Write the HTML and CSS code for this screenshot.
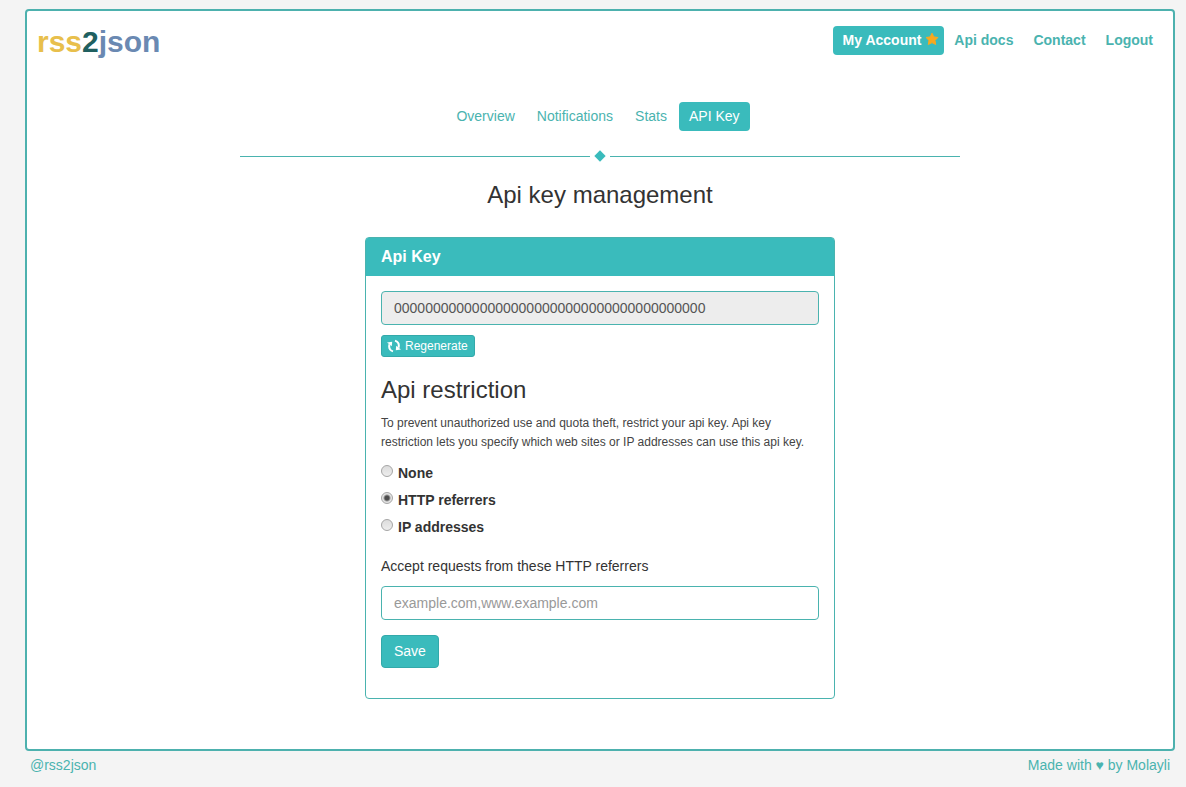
FILE: index.html
```html
<!DOCTYPE html>
<html lang="en">
<head>
    <meta charset="UTF-8">
    <meta name="viewport" content="width=device-width, initial-scale=1.0">
    <title>rss2json - Api key management</title>
    <link rel="stylesheet" href="styles.css">
</head>
<body>
    <div class="page">
        <header class="header">
            <a class="logo" href="#"><span class="logo-rss">rss</span><span class="logo-two">2</span><span class="logo-json">json</span></a>
            <nav class="main-nav">
                <a class="pill active account" href="#">My Account
                    <svg class="star" viewBox="0 0 14 14" aria-hidden="true">
                        <path d="M7 1.2 L8.8 4.9 L12.9 5.5 L10 8.4 L10.7 12.5 L7 10.6 L3.3 12.5 L4 8.4 L1.1 5.5 L5.2 4.9 Z"/>
                    </svg>
                </a>
                <a class="pill" href="#">Api docs</a>
                <a class="pill" href="#">Contact</a>
                <a class="pill" href="#">Logout</a>
            </nav>
        </header>

        <nav class="tabs">
            <a class="pill" href="#">Overview</a>
            <a class="pill" href="#">Notifications</a>
            <a class="pill" href="#">Stats</a>
            <a class="pill active" href="#">API Key</a>
        </nav>

        <div class="divider"><span class="diamond"></span></div>

        <main>
            <h1 class="title">Api key management</h1>

            <section class="panel">
                <h2 class="panel-heading">Api Key</h2>
                <form class="panel-body">
                    <input type="text" class="form-control" aria-label="Api Key" value="0000000000000000000000000000000000000000" readonly>
                    <button type="button" class="btn btn-small">
                        <svg class="refresh" viewBox="0 0 14 14" aria-hidden="true">
                            <path class="arc" d="M6 12.4 C2.8 11.3 1.6 8.6 2.5 5.2"/>
                            <path class="arc" d="M8 1.6 C11.2 2.7 12.4 5.4 11.5 8.8"/>
                            <path class="tip" d="M0 3.6 L5.2 2.8 L4.8 7.2 Z"/>
                            <path class="tip" d="M14 10.4 L8.8 11.2 L9.2 6.8 Z"/>
                        </svg>
                        Regenerate
                    </button>

                    <h3 class="subtitle">Api restriction</h3>
                    <p class="help">To prevent unauthorized use and quota theft, restrict your api key. Api key restriction lets you specify which web sites or IP addresses can use this api key.</p>

                    <div class="options">
                        <label class="option"><input type="radio" name="restriction" value="none"> None</label>
                        <label class="option"><input type="radio" name="restriction" value="http" checked> HTTP referrers</label>
                        <label class="option"><input type="radio" name="restriction" value="ip"> IP addresses</label>
                    </div>

                    <label class="field-label" for="referrers">Accept requests from these HTTP referrers</label>
                    <input type="text" class="form-control" id="referrers" placeholder="example.com,www.example.com">
                    <button type="button" class="btn save">Save</button>
                </form>
            </section>
        </main>
    </div>

    <footer class="footer">
        <a href="#">@rss2json</a>
        <a href="#">Made with ♥ by Molayli</a>
    </footer>
</body>
</html>
```
FILE: styles.css
```css
* {
    box-sizing: border-box;
}

body {
    margin: 0;
    padding: 9px 11px 0 25px;
    background-color: #f4f4f4;
    color: #333;
    font-family: "Liberation Sans", Arial, sans-serif;
    font-size: 14px;
    line-height: 20px;
}

a {
    color: #4ab3af;
    text-decoration: none;
}

h1, h2, h3, p {
    margin: 0;
}

.page {
    background-color: #fff;
    border: 2px solid #4db1ae;
    border-radius: 4px;
    padding: 15px 10px 50px;
}

/* Header */
.header {
    display: flex;
    justify-content: space-between;
    align-items: flex-start;
}

.logo {
    font-size: 30px;
    font-weight: bold;
    line-height: 32px;
}

.logo-rss {
    color: #e8bf4c;
}

.logo-two {
    color: #206060;
}

.logo-json {
    color: #6a89b2;
}

.main-nav {
    display: flex;
    font-weight: bold;
}

.pill {
    padding: 5px 10px;
    border-radius: 4px;
    line-height: 19px;
}

.pill.active {
    background-color: #3abbbc;
    color: #fff;
}

.pill.account {
    padding-right: 5px;
}

.star {
    width: 14px;
    height: 14px;
    vertical-align: -1px;
    fill: #f9a81c;
    stroke: #f9a81c;
    stroke-width: 1;
    stroke-linejoin: round;
}

/* Account tabs */
.tabs {
    display: flex;
    justify-content: center;
    gap: 2px;
    margin-top: 44px;
    padding-right: 4px;
}

.divider {
    display: flex;
    align-items: center;
    gap: 5px;
    max-width: 720px;
    height: 10px;
    margin: 20px auto 0;
}

.divider::before,
.divider::after {
    content: "";
    flex: 1;
    height: 1px;
    background-color: #4ab3af;
}

.diamond {
    width: 8px;
    height: 8px;
    margin: 0 1px;
    background-color: #3abbbc;
    transform: rotate(45deg);
}

.title {
    margin-top: 20px;
    font-size: 24px;
    font-weight: normal;
    line-height: 28px;
    text-align: center;
}

/* Api key panel */
.panel {
    max-width: 470px;
    margin: 28px auto 0;
    border: 1px solid #4ab3af;
    border-radius: 4px;
}

.panel-heading {
    padding: 9px 15px;
    background-color: #3abbbc;
    border-radius: 2px 2px 0 0;
    color: #fff;
    font-size: 16px;
    line-height: 20px;
}

.panel-body {
    padding: 15px 15px 30px;
}

.form-control {
    display: block;
    width: 100%;
    height: 34px;
    padding: 6px 12px;
    border: 1px solid #4ab3af;
    border-radius: 4px;
    background-color: #fff;
    color: #555;
    font-family: inherit;
    font-size: 14px;
}

.form-control[readonly] {
    background-color: #ededed;
}

.form-control::placeholder {
    color: #999;
}

.btn {
    display: flex;
    align-items: center;
    border: 1px solid #33a9aa;
    border-radius: 4px;
    background-color: #3abbbc;
    color: #fff;
    font-family: inherit;
    cursor: pointer;
}

.btn-small {
    gap: 4px;
    height: 22px;
    margin-top: 10px;
    padding: 0 6px 0 5px;
    border-radius: 3px;
    font-size: 12px;
}

.refresh {
    width: 14px;
    height: 14px;
}

.refresh .arc {
    fill: none;
    stroke: #fff;
    stroke-width: 2;
}

.refresh .tip {
    fill: #fff;
}

.subtitle {
    margin-top: 20px;
    font-size: 24px;
    font-weight: normal;
    line-height: 26px;
}

.help {
    margin-top: 11px;
    color: #444;
    font-size: 12px;
    line-height: 19px;
}

.options {
    display: flex;
    flex-direction: column;
    align-items: flex-start;
    gap: 7px;
    margin-top: 11px;
}

.option {
    display: flex;
    gap: 5px;
    font-weight: bold;
}

.option input {
    appearance: none;
    width: 12px;
    height: 12px;
    margin: 2px 0 0;
    border: 1px solid #a5a5a5;
    border-radius: 50%;
    background: linear-gradient(#dcdcdc, #ededed);
}

.option input:checked {
    background: radial-gradient(circle, #4c4c4c 2px, #e4e4e4 4px);
}

.field-label {
    display: block;
    margin: 19px 0 10px;
}

.save {
    height: 33px;
    margin-top: 15px;
    padding: 0 12px 1px;
    font-size: 14px;
}

.footer {
    display: flex;
    justify-content: space-between;
    padding: 4px 5px 10px;
}
```
